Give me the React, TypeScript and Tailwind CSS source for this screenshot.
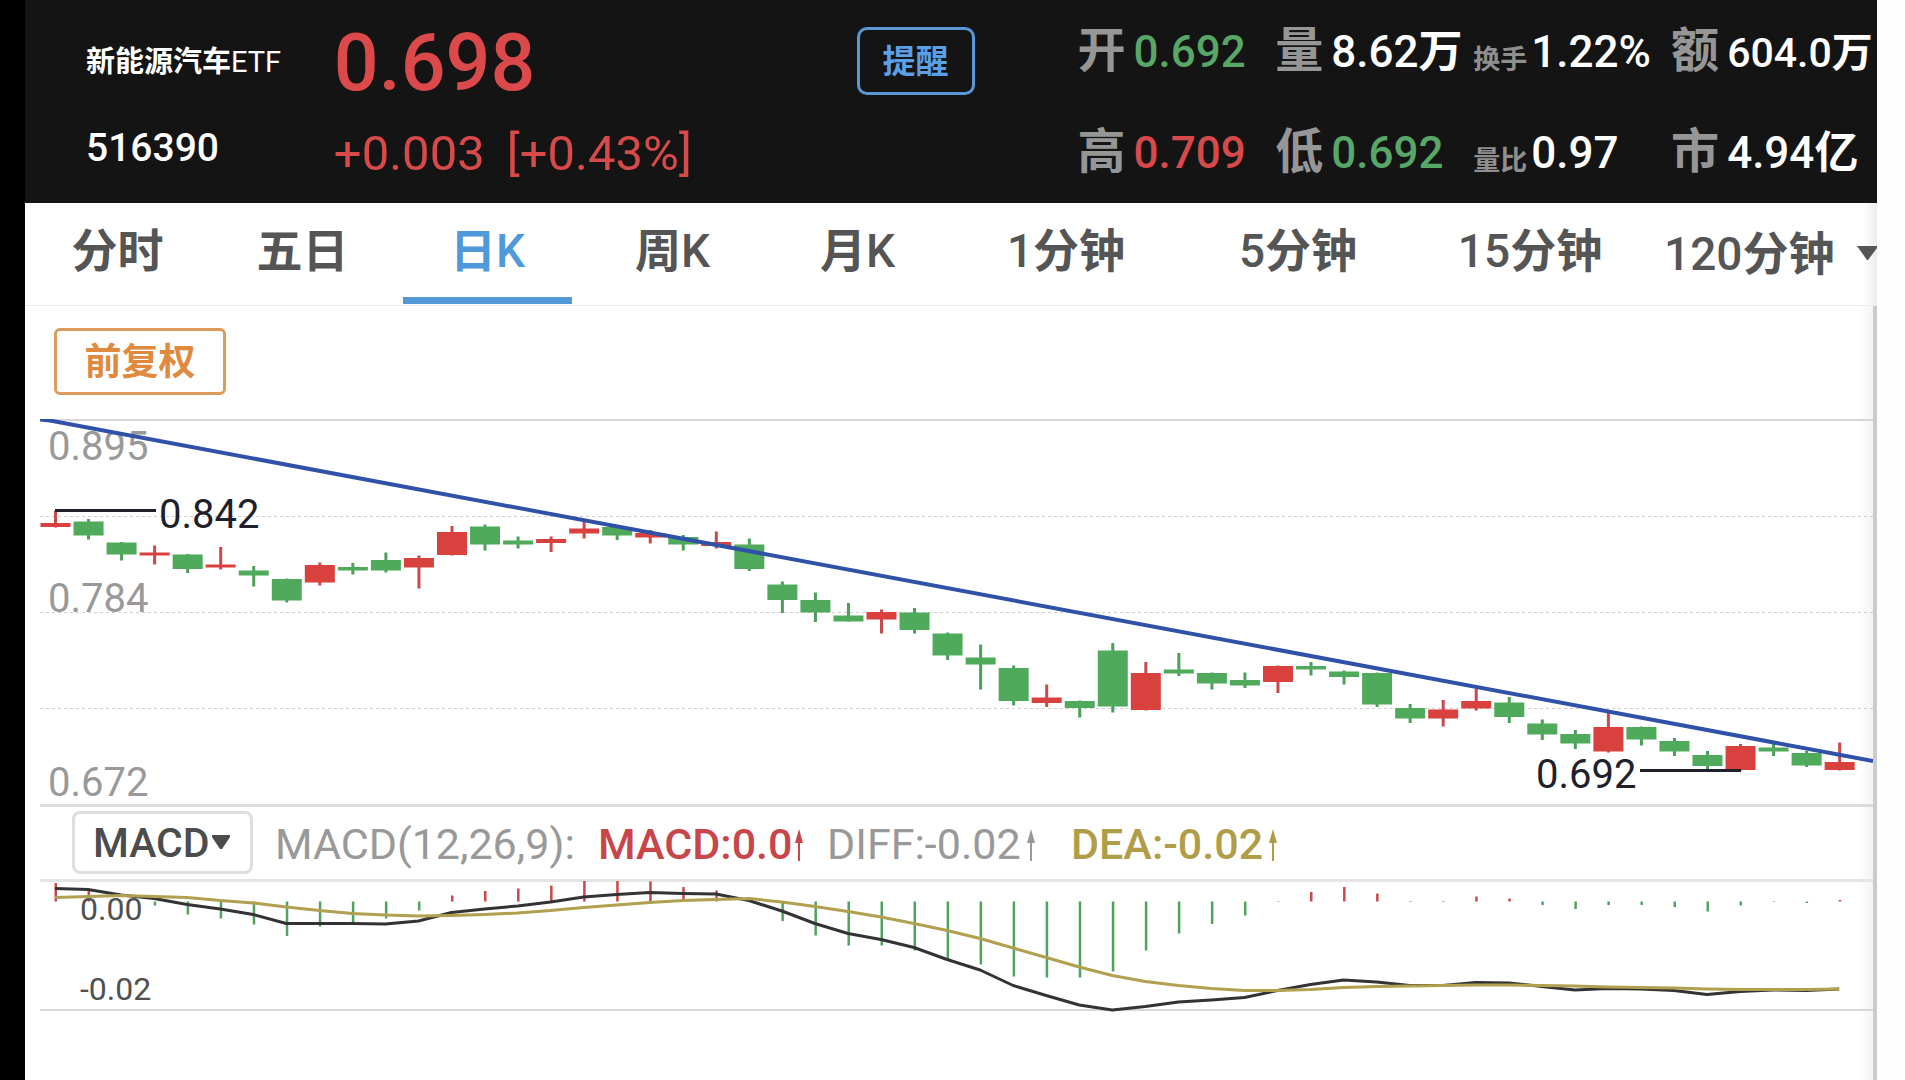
import React, { useState } from "react";

type Tone = "up" | "down" | "plain";

const toneClass: Record<Tone, string> = {
  up: "text-[#d8494a]",
  down: "text-[#58a766]",
  plain: "text-white",
};

type Stat = { label: string; value: string; unit?: string; tone: Tone; small?: boolean; compact?: boolean };

const stats: Stat[][] = [
  [
    { label: "开", value: "0.692", tone: "down" },
    { label: "量", value: "8.62", unit: "万", tone: "plain" },
    { label: "换手", value: "1.22%", tone: "plain", small: true },
    { label: "额", value: "604.0", unit: "万", tone: "plain", compact: true },
  ],
  [
    { label: "高", value: "0.709", tone: "up" },
    { label: "低", value: "0.692", tone: "down" },
    { label: "量比", value: "0.97", tone: "plain", small: true },
    { label: "市", value: "4.94", unit: "亿", tone: "plain" },
  ],
];

const tabs = ["分时", "五日", "日K", "周K", "月K", "1分钟", "5分钟", "15分钟"];

const X0 = 55;
const STEP = 33.04;
const xAt = (i: number) => X0 + STEP * i;

// direction (1 = up / red, 0 = down / green), wick top, wick bottom, body top, body bottom
const candles: [number, number, number, number, number][] = [
  [1, 511, 527.5, 523, 527], [0, 519, 539.5, 521.5, 535.5], [0, 542, 560.5, 542.5, 554.5],
  [1, 545.5, 564.5, 552.5, 555.5], [0, 554, 573, 554.5, 569], [1, 547, 569.5, 564.5, 567.5],
  [0, 566, 586.5, 570.5, 575.5], [0, 578.5, 602.5, 579, 600.5], [1, 562.5, 585.5, 565, 582.5],
  [0, 563, 574.5, 567, 570.5], [0, 552.5, 572.5, 560, 570.5], [1, 555.5, 588.5, 558, 567.5],
  [1, 526, 555.5, 532, 555], [0, 524.5, 550.5, 526.5, 544.5], [0, 536.5, 548.5, 540.5, 544.5],
  [1, 536.5, 552, 539, 543], [1, 520.5, 538.5, 528.5, 533.5], [0, 526.5, 540, 527, 535.5],
  [1, 530, 543.5, 533, 537.5], [0, 535, 550.5, 537, 544.5], [1, 531.5, 548.5, 542, 546],
  [0, 538.5, 571, 544.5, 569], [0, 581.5, 613, 584.5, 600], [0, 592.5, 622, 600, 612.5],
  [0, 603, 621.5, 615.5, 621.5], [1, 609.5, 633.5, 612, 619.5], [0, 608, 633.5, 612.5, 630],
  [0, 632.5, 660, 633.5, 655.5], [0, 644.5, 689.5, 657.5, 664.5], [0, 665.5, 705.5, 668, 701],
  [1, 684.5, 707, 697.5, 703], [0, 700.5, 717.5, 701, 708], [0, 643, 712.5, 650.5, 706.5],
  [1, 662, 710.5, 673, 710], [0, 653, 676, 669.5, 673.5], [0, 672.5, 689.5, 673, 683.5],
  [0, 672.5, 688, 680, 685.5], [1, 665.5, 693, 666, 682], [0, 662, 675.5, 666, 669.5],
  [0, 670.5, 684.5, 671.5, 677], [0, 672.5, 707, 673, 704.5], [0, 704, 723, 708, 718.5],
  [1, 700, 726.5, 709.5, 718.5], [1, 689, 710.5, 701, 708.5], [0, 697, 723, 702.5, 717],
  [0, 719.5, 740, 723.5, 734.5], [0, 730, 749, 734, 743.5], [1, 712.5, 752.5, 727, 751.5],
  [0, 726.5, 745.5, 727, 739.5], [0, 738, 756, 741, 751.5], [0, 751, 769, 755, 766],
  [1, 744, 770.5, 746, 770], [0, 744, 756, 747.5, 751.5], [0, 751, 767, 753, 765.5],
  [1, 742.5, 770.5, 762, 770],
];

const ZERO = 901.5;

const histogram = [
  883, 890, 901, 905.5, 914.5, 918.5, 924.5, 936, 926.5, 924, 918.5, 910.5, 895.5, 891, 888.5,
  885.5, 881, 881, 881.5, 887, 890.5, 901, 921, 935.5, 945.5, 945.5, 950.5, 959, 964.5, 976.5,
  977.5, 977.5, 971.5, 950.5, 933.5, 924, 915.5, 902, 892, 887, 893.5, 901, 901, 896.5, 898.5,
  905, 909, 905, 905, 907, 911.5, 905.5, 902, 903, 900,
];

const diff = [
  888.5, 889.5, 895, 898.5, 904.5, 909, 914.5, 923.5, 923.5, 923.5, 924, 921, 912.5, 909, 906,
  902, 897, 894.5, 892.5, 893.5, 894, 900.5, 911, 923.5, 933.5, 939.5, 947.5, 959.5, 970, 985.5,
  995.5, 1005, 1010, 1006.5, 1002, 1000, 997.5, 990.5, 984.5, 980, 982, 985.5, 985.5, 982.5, 983,
  986.5, 990, 988.5, 989, 990.5, 994.5, 991.5, 990, 990.5, 989,
];

const dea = [
  897.5, 896.5, 895.5, 896.5, 897.5, 900.5, 903, 907, 910.5, 913.5, 915, 916, 915.5, 914.5, 913,
  910.5, 907.5, 905, 902.5, 900.5, 899.5, 898.5, 902, 906.5, 911.5, 917, 923.5, 930.5, 938.5, 948,
  957.5, 967, 975.5, 981.5, 985.5, 988.5, 990.5, 990.5, 989.5, 987.5, 986.5, 986, 985.5, 985, 985,
  985.5, 986, 987, 987.5, 988, 989, 989.5, 989.5, 989.5, 989,
];

const toPoints = (ys: number[]) => ys.map((y, i) => `${xAt(i)},${y}`).join(" ");

function StatCell({ label, value, unit, tone, small, compact }: Stat) {
  return (
    <div className={`flex items-baseline whitespace-nowrap ${small ? "gap-1" : "gap-2"}`}>
      <dt
        className={
          small
            ? "self-end text-[27px] leading-none font-bold text-[#8f8f8f]"
            : "text-[48px] leading-none font-bold text-[#969696]"
        }
      >
        {label}
      </dt>
      <dd className={`leading-none font-medium ${compact ? "text-[41px]" : "text-[44px]"} ${toneClass[tone]}`}>
        {value}
        {unit && <span className="font-bold">{unit}</span>}
      </dd>
    </div>
  );
}

function StatRow({ items }: { items: Stat[] }) {
  return (
    <dl className="grid grid-cols-[198fr_198fr_198fr_206fr] items-baseline">
      {items.map((s) => (
        <StatCell key={s.label} {...s} />
      ))}
    </dl>
  );
}

function Header() {
  return (
    <header className="grid grid-cols-[992fr_800fr] bg-[#141414] pl-[61px] text-white">
      <div className="grid grid-cols-[248fr_523fr_221fr] grid-rows-[122px_81px] items-center">
        <h1 className="pt-[2px] text-[29px] leading-none font-bold whitespace-nowrap">
          新能源汽车<span className="font-normal">ETF</span>
        </h1>
        <p className="pt-[4px] text-[79px] leading-none font-medium text-[#db494a]">0.698</p>
        <div>
          <button
            type="button"
            className="block h-[68px] w-[118px] rounded-[10px] border-[3px] border-[#5b97d6] text-[33px] leading-none font-bold text-[#5b9fe6]"
          >
            提醒
          </button>
        </div>
        <p className="self-start pt-[7px] text-[39px] leading-none font-medium">516390</p>
        <p className="flex gap-[22px] self-start pt-[7px] text-[49px] leading-none text-[#d8494a]">
          <span>+0.003</span>
          <span>[+0.43%]</span>
        </p>
      </div>
      <div className="grid grid-rows-[101px_102px] items-center">
        <StatRow items={stats[0]} />
        <StatRow items={stats[1]} />
      </div>
    </header>
  );
}

// Hanzi are set bold, Latin letters and digits one step lighter.
function MixedLabel({ text }: { text: string }) {
  return (
    <span>
      {text.split(/([0-9A-Z]+)/).map((part, i) =>
        i % 2 ? (
          <span key={i} className="font-medium">
            {part}
          </span>
        ) : (
          part
        ),
      )}
    </span>
  );
}

function Tabs() {
  const [active, setActive] = useState("日K");
  return (
    <nav className="grid h-[103px] grid-cols-[repeat(5,185fr)_repeat(3,232fr)_231fr] overflow-hidden border-b border-[#ececec] bg-[linear-gradient(to_left,#ececec,#ffffff_14px)] text-[46px] leading-none font-bold text-[#555555]">
      {tabs.map((t) => (
        <button
          key={t}
          type="button"
          onClick={() => setActive(t)}
          className={`flex flex-col items-center justify-between whitespace-nowrap pt-[25px] ${
            t === active ? "text-[#4f99da]" : ""
          }`}
        >
          <MixedLabel text={t} />
          <span className={`mb-px h-[7px] w-[169px] ${t === active ? "bg-[#5399d8]" : ""}`} />
        </button>
      ))}
      <button
        type="button"
        aria-haspopup="menu"
        className="flex items-start justify-between pt-[28px] pl-[18px] whitespace-nowrap"
      >
        <MixedLabel text="120分钟" />
        <svg viewBox="0 0 20 14" className="mt-[15px] h-[14px] w-[20px]" aria-hidden="true">
          <path d="M0 0H20V2L11 14H10Z" fill="#555" />
        </svg>
      </button>
    </nav>
  );
}

function PriceChart() {
  return (
    <svg viewBox="40 419 1833 388" className="block h-auto w-full" role="img" aria-label="日K线图">
      <rect x="40" y="419" width="1833" height="2" fill="#d6d6d6" />
      {[516, 612, 708].map((y) => (
        <line key={y} x1="40" x2="1873" y1={y + 0.5} y2={y + 0.5} stroke="#cfcfcf" strokeDasharray="3 3" />
      ))}
      <rect x="40" y="804" width="1833" height="3" fill="#dcdcdc" />
      <g fontSize="40" fill="#999999">
        <text x="48" y="460">0.895</text>
        <text x="48" y="612">0.784</text>
        <text x="48" y="796">0.672</text>
      </g>
      {candles.map(([up, hi, lo, top, bottom], i) => (
        <g key={i}>
          <rect x={xAt(i) - 1} y={hi} width="3" height={lo - hi} fill={up ? "#c94a4c" : "#4b9f5a"} />
          <rect x={xAt(i) - 14.5} y={top} width="30" height={bottom - top} fill={up ? "#d9413e" : "#4fab5b"} />
        </g>
      ))}
      <path d="M55 510.5H156" stroke="#20202c" strokeWidth="3" />
      <path d="M1640 770.5H1741" stroke="#20202c" strokeWidth="3" />
      <g fontSize="40" fill="#20202c">
        <text x="159" y="528">0.842</text>
        <text x="1536" y="788">0.692</text>
      </g>
      <path d="M40 419.5L50 420.5L1873 761" stroke="#2f52a8" strokeWidth="4" fill="none" />
    </svg>
  );
}

function RisingArrow() {
  return (
    <svg viewBox="0 0 8 32" className="h-[32px] w-[8px]" aria-hidden="true">
      <path d="M4 0L8 14H5V32H3V14H0Z" fill="currentColor" />
    </svg>
  );
}

function IndicatorBar() {
  return (
    <div className="flex h-[72px] items-start pt-1 pl-[32px] text-[43px] leading-none whitespace-nowrap">
      <div className="relative mr-[22px]">
        <select
          aria-label="指标"
          defaultValue="MACD"
          className="block h-[63px] w-[181px] appearance-none rounded-[8px] border-[3px] border-[#dedede] bg-white pt-[2px] pl-[18px] text-[41px] leading-[55px] font-medium text-[#4c4c4c]"
        >
          <option>MACD</option>
        </select>
        <svg viewBox="0 0 18 14" className="pointer-events-none absolute top-[24px] right-[23px] h-[14px] w-[18px]" aria-hidden="true">
          <path d="M0 0H18V2L10 14H8L0 2Z" fill="#4c4c4c" />
        </svg>
      </div>
      <span className="w-[323px] pt-[12px] text-[#999999]">MACD(12,26,9):</span>
      <span className="flex w-[229px] items-center gap-[2px] pt-[12px] font-medium text-[#c8464a]">
        MACD:0.0
        <RisingArrow />
      </span>
      <span className="flex w-[244px] items-center gap-[6px] pt-[12px] text-[#999999]">
        DIFF:-0.02
        <RisingArrow />
      </span>
      <span className="flex items-center gap-[6px] pt-[12px] font-medium text-[#b09d48]">
        DEA:-0.02
        <RisingArrow />
      </span>
    </div>
  );
}

function MacdChart() {
  return (
    <svg viewBox="40 879 1833 133" className="block h-auto w-full" role="img" aria-label="MACD">
      <rect x="40" y="879" width="1833" height="3" fill="#e4e4e4" />
      <rect x="40" y="1009" width="1833" height="2" fill="#d8d8d8" />
      {histogram.map((y, i) => (
        <rect
          key={i}
          x={xAt(i) - 0.5}
          y={Math.min(y, ZERO)}
          width="2.5"
          height={Math.abs(y - ZERO)}
          fill={y < ZERO ? "#c8484c" : "#4fa35f"}
        />
      ))}
      <g fontSize="32" fill="#505050">
        <text x="80" y="920">0.00</text>
        <text x="80" y="1000">-0.02</text>
      </g>
      <polyline points={toPoints(diff)} fill="none" stroke="#333336" strokeWidth="3" strokeLinejoin="round" />
      <polyline points={toPoints(dea)} fill="none" stroke="#b0a04f" strokeWidth="3" strokeLinejoin="round" />
    </svg>
  );
}

export default function App() {
  return (
    <div className="flex min-h-screen bg-[#fdfdfd] font-[Roboto,'Noto_Sans_CJK_SC',sans-serif]">
      <div className="w-[25px] shrink-0 bg-black" />
      <main className="mr-[28px] flex min-w-0 flex-1 flex-col bg-white">
        <Header />
        <Tabs />
        <section className="flex-1 border-r-[4px] border-[#cbcbcb] bg-[linear-gradient(to_left,#f3f3f3,#ffffff_14px)] pt-[22px] pl-[15px]">
          <button
            type="button"
            className="mb-[24px] ml-[14px] block h-[67px] w-[172px] rounded-[6px] border-[3px] border-[#dc9a5c] pt-[2px] text-[37px] leading-none font-bold text-[#e08a40]"
          >
            前复权
          </button>
          <PriceChart />
          <IndicatorBar />
          <MacdChart />
        </section>
      </main>
    </div>
  );
}
